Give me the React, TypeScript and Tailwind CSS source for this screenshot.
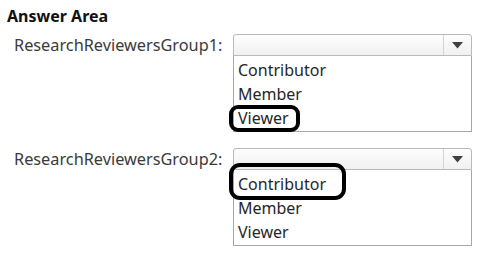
const options = ['Contributor', 'Member', 'Viewer'];

function Dropdown({ circled }: { circled: string }) {
  return (
    <div className="w-[239px]">
      <div className="h-[22px] flex border border-[#b9b9b9] rounded-t-[3px] bg-gradient-to-b from-[#fdfdfd] to-[#f1f1f1]">
        <div className="flex-1" />
        <div className="w-[28px] border-l border-[#d4d4d4] flex items-center justify-center">
          <svg width="11" height="7" viewBox="0 0 11 7">
            <path d="M0 0 L11 0 L5.5 6.5 Z" fill="#404040" />
          </svg>
        </div>
      </div>
      <div className="border border-t-0 border-[#a8a8a8] pt-[2px] pb-[1px]">
        {options.map((o) => (
          <div key={o} className="relative h-[24px] flex items-center pl-[4px] text-[16px] text-[#262626]">
            <span className="leading-none">{o}</span>
            {o === circled && o === 'Viewer' && (
              <div className="absolute left-[-5px] top-[-1px] w-[71px] h-[27px] border-[4px] border-black rounded-[9px]" />
            )}
            {o === circled && o === 'Contributor' && (
              <div className="absolute left-[-5px] top-[-9px] w-[117px] h-[37px] border-[4px] border-black rounded-[11px]" />
            )}
          </div>
        ))}
      </div>
    </div>
  );
}

function Row({ label, circled }: { label: string; circled: string }) {
  return (
    <div className="flex items-start">
      <div className="w-[225px] pl-[14px] h-[22px] flex items-center text-[16.3px] text-[#3a3a3a] leading-none">
        {label}
      </div>
      <div className="ml-[8px]">
        <Dropdown circled={circled} />
      </div>
    </div>
  );
}

export default function App() {
  return (
    <div className="w-[480px] h-[253px] bg-white overflow-hidden font-['Noto_Sans',sans-serif]">
      <div className="pl-[7px] pt-[6px] text-[16px] font-bold text-[#111] leading-[20px]">Answer Area</div>
      <div className="mt-[8px] flex flex-col gap-[16px]">
        <Row label="ResearchReviewersGroup1:" circled="Viewer" />
        <Row label="ResearchReviewersGroup2:" circled="Contributor" />
      </div>
    </div>
  );
}
